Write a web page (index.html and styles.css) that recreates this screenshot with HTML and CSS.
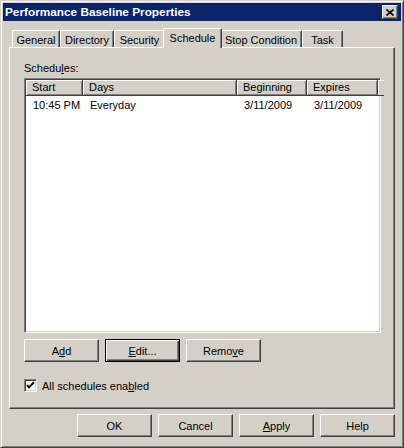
FILE: index.html
```html
<!DOCTYPE html>
<html lang="en">
<head>
    <meta charset="UTF-8">
    <meta name="viewport" content="width=device-width, initial-scale=1.0">
    <title>Performance Baseline Properties</title>
    <link rel="stylesheet" href="styles.css">
</head>
<body>
    <div class="window">
        <div class="titlebar">
            <span class="title">Performance Baseline Properties</span>
            <button class="close" aria-label="Close">
                <svg width="8" height="7" viewBox="0 0 8 7">
                    <path d="M0.5 0.5 L7.5 6.5 M7.5 0.5 L0.5 6.5" stroke="#000" stroke-width="1.7"/>
                </svg>
            </button>
        </div>

        <div class="content">
            <!-- tab strip -->
            <div class="tabs">
                <div class="tab tab-general">General</div>
                <div class="tab tab-directory">Directory</div>
                <div class="tab tab-security">Security</div>
                <div class="tab tab-schedule active">Schedule</div>
                <div class="tab tab-stop">Stop Condition</div>
                <div class="tab tab-task">Task</div>
            </div>

            <div class="panel">
                <div class="group-label">Schedu<u>l</u>es:</div>

                <div class="listbox">
                    <div class="list-head">
                        <div class="col">Start</div>
                        <div class="col">Days</div>
                        <div class="col">Beginning</div>
                        <div class="col">Expires</div>
                        <div class="col filler"></div>
                    </div>
                    <div class="list-row">
                        <div class="cell">10:45 PM</div>
                        <div class="cell">Everyday</div>
                        <div class="cell">3/11/2009</div>
                        <div class="cell">3/11/2009</div>
                    </div>
                </div>

                <div class="list-buttons">
                    <button class="btn">A<u>d</u>d</button>
                    <button class="btn default"><u>E</u>dit...</button>
                    <button class="btn">Remo<u>v</u>e</button>
                </div>

                <label class="check-row">
                    <span class="checkbox">
                        <svg width="11" height="11" viewBox="0 0 11 11">
                            <path d="M2 5 L4 7.2 L9 2.2" stroke="#000" stroke-width="2" fill="none"/>
                        </svg>
                    </span>
                    <span>All schedules ena<u>b</u>led</span>
                </label>
            </div>

            <div class="dialog-buttons">
                <button class="btn">OK</button>
                <button class="btn">Cancel</button>
                <button class="btn"><u>A</u>pply</button>
                <button class="btn">Help</button>
            </div>
        </div>
    </div>
</body>
</html>
```

FILE: styles.css
```css
* {
    box-sizing: border-box;
}

body {
    margin: 0;
    font-family: 'Liberation Sans', Arial, sans-serif;
    font-size: 11px;
    color: #000;
    background-color: #d4d0c8;
}

u {
    text-decoration-thickness: 1px;
    text-underline-offset: 1px;
}

.window {
    width: 404px;
    height: 448px;
    padding: 2px;
    background-color: #d4d0c8;
    border: 1px solid;
    border-color: #d4d0c8 #404040 #404040 #d4d0c8;
    box-shadow: inset 1px 1px #fff, inset -1px -1px #808080;
}

.titlebar {
    height: 18px;
    padding: 0 3px 0 2px;
    display: flex;
    align-items: center;
    justify-content: space-between;
    background-color: #0a246a;
    color: #fff;
}

.title {
    font-weight: bold;
    font-size: 11.8px;
}

.close {
    width: 16px;
    height: 14px;
    padding: 0;
    display: flex;
    align-items: center;
    justify-content: center;
    background-color: #d4d0c8;
    border: 1px solid;
    border-color: #fff #404040 #404040 #fff;
    box-shadow: inset -1px -1px #808080;
}

.content {
    padding: 7px 6px 0;
}

/* tabs */
.tabs {
    height: 19px;
    padding-left: 3px;
    display: flex;
    align-items: flex-end;
}

.tab {
    height: 17px;
    padding-top: 2px;
    line-height: 14px;
    text-align: center;
    background-color: #d4d0c8;
    border-top: 1px solid #fff;
    border-left: 1px solid #fff;
    border-right: 1px solid #404040;
    border-top-left-radius: 2px;
    border-top-right-radius: 2px;
    box-shadow: inset -1px 0 #808080;
}

.tab.active {
    height: 20px;
    margin: 0 -2px -1px;
    position: relative;
    z-index: 1;
}

.tab-general { width: 48px; }
.tab-directory { width: 54px; }
.tab-security { width: 51px; }
.tab-schedule { width: 59px; }
.tab-stop { width: 82px; }
.tab-task { width: 41px; }

.panel {
    height: 362px;
    padding: 14px 13px 0 14px;
    border: 1px solid;
    border-color: #fff #404040 #404040 #fff;
    box-shadow: inset -1px -1px #808080;
}

.group-label {
    line-height: 13px;
    margin-bottom: 3px;
}

/* schedule list */
.listbox {
    width: 357px;
    height: 255px;
    padding: 1px;
    background-color: #fff;
    border: 1px solid;
    border-color: #808080 #fff #fff #808080;
    box-shadow: inset 1px 1px #404040, inset -1px -1px #d4d0c8;
}

.list-head,
.list-row {
    display: grid;
    grid-template-columns: 57px 154px 70px 71px 1fr;
}

.col {
    height: 16px;
    line-height: 15px;
    padding-left: 6px;
    background-color: #d4d0c8;
    border-right: 1px solid #404040;
    border-bottom: 1px solid #404040;
    box-shadow: inset 1px 1px #fff, inset -1px -1px #808080;
}

.col.filler {
    border-right: none;
    box-shadow: inset 1px 1px #fff;
}

.list-row {
    padding-top: 2px;
}

.cell {
    line-height: 14px;
    padding-left: 7px;
}

/* buttons */
.btn {
    width: 75px;
    height: 23px;
    padding: 0;
    font: inherit;
    color: #000;
    background-color: #d4d0c8;
    border: 1px solid;
    border-color: #fff #404040 #404040 #fff;
    box-shadow: inset -1px -1px #808080;
}

.btn.default {
    border-color: #000;
    box-shadow: inset 1px 1px #fff, inset -1px -1px #404040, inset -2px -2px #808080;
}

.list-buttons {
    margin-top: 6px;
    display: flex;
    gap: 6px;
}

.check-row {
    margin-top: 17px;
    height: 13px;
    display: flex;
    align-items: center;
    gap: 5px;
}

.checkbox {
    width: 13px;
    height: 13px;
    display: flex;
    background-color: #fff;
    border: 1px solid;
    border-color: #808080 #fff #fff #808080;
    box-shadow: inset 1px 1px #404040, inset -1px -1px #d4d0c8;
}

.dialog-buttons {
    margin-top: 5px;
    display: flex;
    justify-content: flex-end;
    gap: 6px;
}
```
